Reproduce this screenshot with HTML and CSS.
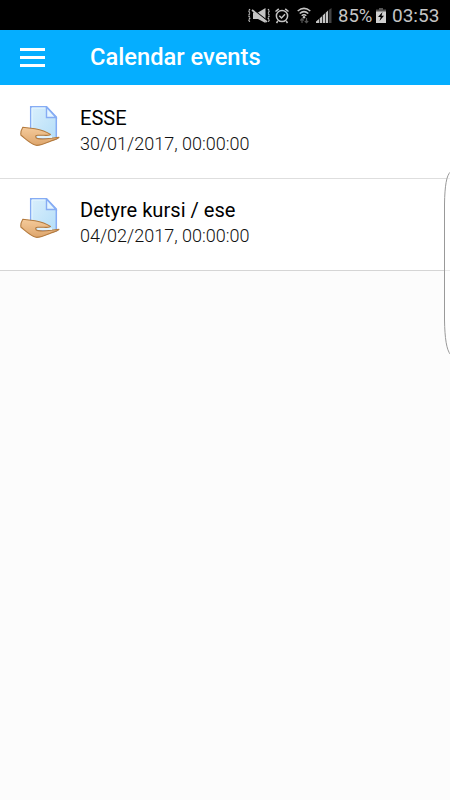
FILE: index.html
```html
<!DOCTYPE html>
<html lang="en">
<head>
    <meta charset="UTF-8">
    <meta name="viewport" content="width=device-width, initial-scale=1.0">
    <title>Calendar events</title>
    <link rel="stylesheet" href="styles.css">
</head>
<body>
    <!-- Phone status bar -->
    <div class="status-bar">
        <svg class="icon-mute" width="24" height="18" viewBox="0 0 24 18" fill="none" stroke="#c4c4c4" stroke-width="1.2">
            <path d="M3 2L1.500 4L3 6L1.500 8.500L3 11L1.500 13L3 15M21 2L22.500 4L21 6L22.500 8.500L21 11L22.500 13L21 15" stroke-dasharray="2 .7"/>
            <path d="M6 5.500H11L18.500 1V16L11 12H6Z" fill="#c4c4c4" stroke="none"/>
            <path d="M6 2.700L20 13.500" stroke="#000" stroke-width="1.500"/>
            <path d="M5 3L20 14.800" stroke-width="1.700"/>
        </svg>
        <svg class="icon-alarm" width="14" height="16" viewBox="0 0 14 16" fill="none" stroke="#c4c4c4" stroke-width="1.500">
            <circle cx="7" cy="8" r="5.600"/>
            <path d="M.5 3.500L3.800 .8M13.500 3.500L10.200 .8M2.800 13L1.500 15M11.200 13L12.500 15M4.300 7.800L6.500 10L10 6.300"/>
        </svg>
        <svg class="icon-wifi" width="14" height="17" viewBox="0 0 14 17" fill="none" stroke="#c4c4c4" stroke-width="1.500">
            <path d="M.7 4Q7-1.200 13.300 4M2.700 6.500Q7 2.800 11.300 6.500M4.700 8.800Q7 6.800 9.300 8.800"/>
            <circle cx="7" cy="10.300" r="1.200" fill="#c4c4c4" stroke="none"/>
            <path d="M5 16V12M3.300 13.500L5 11.700L6.700 13.500M9.500 11V15.500M7.800 14L9.500 15.700L11.200 14" stroke="#555" stroke-width="1.200"/>
        </svg>
        <svg class="icon-signal" width="16" height="16" viewBox="0 0 16 16" fill="#c4c4c4">
            <path d="M0 15V13.500L3 11V15ZM3.700 15V10.300L6 8.300V15ZM6.700 15V7.500L9 5.300V15ZM9.700 15V4.700L12 2.500V15Z"/>
            <path d="M12.700 15V2L15.500 0V15Z" fill="#444"/>
        </svg>
        <span class="battery-level">85%</span>
        <svg class="icon-battery" width="10" height="15" viewBox="0 0 10 15">
            <path d="M3 0H7V1.500H10V4H0V1.500H3Z" fill="#555"/>
            <path d="M0 3.500H10V15H0Z" fill="#d0d0d0"/>
            <path d="M6.500 4L2 9H4.700L3.500 13L8 7.800H5.500Z" fill="#000"/>
        </svg>
        <span class="clock">03:53</span>
    </div>

    <header class="header">
        <button class="menu-button" type="button" aria-label="Menu">
            <span></span>
            <span></span>
            <span></span>
        </button>
        <h1>Calendar events</h1>
    </header>

    <!-- Assignment icon, shared by the events -->
    <svg class="symbols" width="0" height="0">
        <defs>
            <linearGradient id="paper" x1="0" y1="0" x2="1" y2="1">
                <stop offset="0" stop-color="#d9effc"/>
                <stop offset="1" stop-color="#b5def8"/>
            </linearGradient>
            <linearGradient id="skin" x1="0" y1="0" x2="0" y2="1">
                <stop offset="0" stop-color="#f5cb9b"/>
                <stop offset="1" stop-color="#dda56c"/>
            </linearGradient>
            <symbol id="assign" viewBox="0 0 40 40">
                <path d="M10.700.7H26.500L36.300 11V33H10.700Z" fill="url(#paper)" stroke="#86acf4" stroke-width="1.500"/>
                <path d="M12 32V2H25.500" fill="none" stroke="#e7f7ff"/>
                <path d="M26.500 1V11.500H36Z" fill="#e4f5ff" stroke="#86acf4" stroke-width="1.400"/>
                <path d="M2.800 21.200L15 22.700C20 23.500 27 26 30.500 28.500C29.500 29.800 27 29.300 23.500 29.300H17.500C15 29.300 15 32.300 18 32.600C23 33.400 28 32.700 31 32.200L39 31.300C38 33.200 34 33.800 30.500 35.200C25 37.500 20 39.800 16 39.300C11 38.300 7 34.200 1 29.300C.4 27 1.500 23.500 2.800 21.200Z" fill="url(#skin)" stroke="#b47b3f" stroke-width="1.100" stroke-linejoin="round"/>
                <path d="M17.500 31H32" fill="none" stroke="#e2f3fd" stroke-width="1.900"/>
            </symbol>
        </defs>
    </svg>

    <main class="event-list">
        <div class="event">
            <svg class="event-icon"><use href="#assign"/></svg>
            <div class="event-info">
                <h2>ESSE</h2>
                <p>30/01/2017, 00:00:00</p>
            </div>
        </div>
        <div class="event">
            <svg class="event-icon"><use href="#assign"/></svg>
            <div class="event-info">
                <h2>Detyre kursi / ese</h2>
                <p>04/02/2017, 00:00:00</p>
            </div>
        </div>
    </main>

    <!-- Edge panel handle -->
    <svg class="edge-handle" width="6" height="186" viewBox="0 0 6 186">
        <path d="M6.500 2C2.500 5 .8 16 .5 34V150C.8 168 2.500 180 6.500 184.500V2Z" fill="#fff" fill-opacity=".5" stroke="#999"/>
    </svg>
</body>
</html>
```

FILE: styles.css
```css
* {
    box-sizing: border-box;
}

body {
    margin: 0;
    height: 800px;
    position: relative;
    overflow: hidden;
    background-color: #fcfcfc;
    font-family: Roboto, sans-serif;
}

h1, h2, p {
    margin: 0;
}

.status-bar {
    display: flex;
    align-items: center;
    height: 30px;
    padding: 1px 10px 0 0;
    justify-content: flex-end;
    background-color: #000;
    color: #c4c4c4;
    font-size: 19px;
    white-space: nowrap;
}

.status-bar svg {
    flex-shrink: 0;
}

.icon-alarm {
    margin-left: 4px;
}

.icon-wifi {
    margin-left: 8px;
}

.icon-signal {
    margin-left: 5px;
}

.battery-level {
    width: 35px;
    margin-left: 6px;
    font-size: 18.5px;
}

.icon-battery {
    margin-left: 3px;
}

.clock {
    width: 48px;
    margin-left: 6px;
}

.header {
    display: flex;
    align-items: center;
    height: 55px;
    padding: 0 0 1px 20px;
    background-color: #05aeff;
    color: #fff;
}

.header h1 {
    margin-left: 45px;
    font-size: 23.7px;
    font-weight: 500;
    line-height: 28px;
}

.menu-button {
    display: flex;
    flex-direction: column;
    gap: 5px;
    width: 25px;
    padding: 1px 0 0;
    border: none;
    background: none;
}

.menu-button span {
    height: 3px;
    background-color: #fff;
}

.symbols {
    position: absolute;
}

.event {
    display: flex;
    height: 92px;
    padding: 19px 20px;
    background-color: #fff;
    border-bottom: 1px solid #d5d5d5;
}

.event:first-child {
    height: 94px;
    padding-top: 21px;
    border-bottom: 1px solid #dedede;
}

.event-icon {
    width: 40px;
    height: 40px;
}

.event-info {
    margin-left: 20px;
}

.event h2 {
    font-size: 20.1px;
    font-weight: 400;
    line-height: 25px;
    color: #000;
}

.event p {
    font-size: 18px;
    font-weight: 300;
    line-height: 24px;
    margin-top: 1px;
    color: #111;
}

/* sits over the right edge of the screen */
.edge-handle {
    position: absolute;
    top: 170px;
    right: 0;
}
```
